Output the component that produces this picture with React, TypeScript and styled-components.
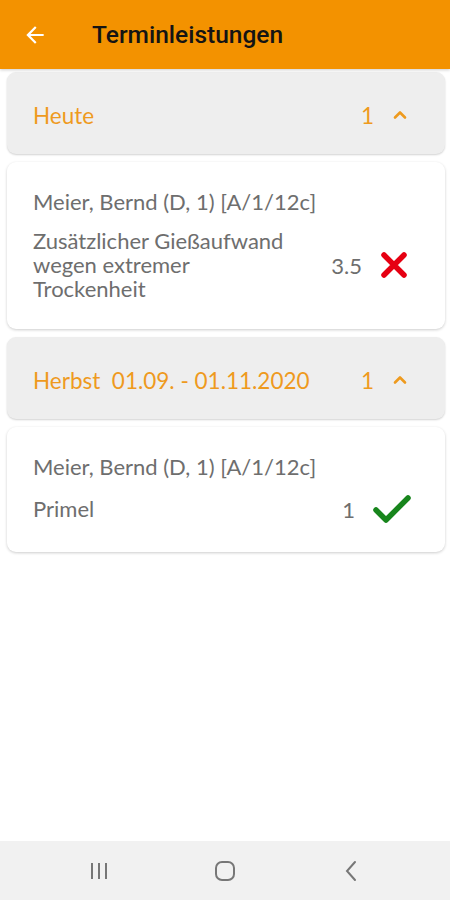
import { FC } from 'react'
import styled, { createGlobalStyle } from 'styled-components'

const GlobalStyle = createGlobalStyle`
  html, body {
    margin: 0;
    padding: 0;
    background: #ffffff;
  }
  #root {
    height: 900px;
  }
`

type Entry = {
  person: string,
  text: string,
  amount: string,
  done: boolean
}

type Group = {
  title: string,
  count: number,
  entries: Entry[]
}

const groups: Group[] = [
  {
    title: 'Heute',
    count: 1,
    entries: [
      {
        person: 'Meier, Bernd (D, 1) [A/1/12c]',
        text: 'Zusätzlicher Gießaufwand wegen extremer Trockenheit',
        amount: '3.5',
        done: false
      }
    ]
  },
  {
    title: 'Herbst\u00a0\u00a001.09. - 01.11.2020',
    count: 1,
    entries: [
      {
        person: 'Meier, Bernd (D, 1) [A/1/12c]',
        text: 'Primel',
        amount: '1',
        done: true
      }
    ]
  }
]

const BackArrow = () => (
  <svg width="26" height="26" viewBox="0 0 24 24">
    <path d="M20 11H7.83l5.59-5.59L12 4l-8 8 8 8 1.41-1.41L7.83 13H20v-2z" fill="#ffffff" />
  </svg>
)

const Chevron = () => (
  <svg width="16" height="16" viewBox="0 0 16 16">
    <path d="M3 10.5 L8 5.5 L13 10.5" fill="none" stroke="#ee9a1e" strokeWidth="2.6" strokeLinecap="round" strokeLinejoin="round" />
  </svg>
)

const Cross = () => (
  <svg width="28" height="28" viewBox="0 0 28 28">
    <path d="M4 4 L24 24 M24 4 L4 24" stroke="#e60012" strokeWidth="5.5" strokeLinecap="round" />
  </svg>
)

const Check = () => (
  <svg width="38" height="30" viewBox="0 0 38 30">
    <path d="M3 16 L13 26 L35 4" fill="none" stroke="#17851c" strokeWidth="5.5" strokeLinecap="round" strokeLinejoin="round" />
  </svg>
)

const App: FC = () => {
  return (
    <Screen>
      <GlobalStyle />
      <TopBar>
        <BackButton><BackArrow /></BackButton>
        <Title>Terminleistungen</Title>
      </TopBar>
      <Content>
        {groups.map((group) => (
          <Section key={group.title}>
            <GroupHeader>
              <GroupTitle>{group.title}</GroupTitle>
              <GroupCount>{group.count}</GroupCount>
              <Chevron />
            </GroupHeader>
            {group.entries.map((entry, i) => (
              <EntryCard key={i}>
                <Person>{entry.person}</Person>
                <EntryRow>
                  <EntryText>{entry.text}</EntryText>
                  <Amount>{entry.amount}</Amount>
                  <StatusIcon $done={entry.done}>
                    {entry.done ? <Check /> : <Cross />}
                  </StatusIcon>
                </EntryRow>
              </EntryCard>
            ))}
          </Section>
        ))}
      </Content>
      <NavBar>
        <NavButton>
          <svg width="22" height="18" viewBox="0 0 22 18">
            <path d="M4 1 V17 M11 1 V17 M18 1 V17" stroke="#777" strokeWidth="2" />
          </svg>
        </NavButton>
        <NavButton>
          <svg width="22" height="22" viewBox="0 0 22 22">
            <rect x="2" y="2" width="18" height="18" rx="6" fill="none" stroke="#777" strokeWidth="2" />
          </svg>
        </NavButton>
        <NavButton>
          <svg width="14" height="22" viewBox="0 0 14 22">
            <path d="M11 2 L3 11 L11 20" fill="none" stroke="#777" strokeWidth="2" strokeLinecap="round" />
          </svg>
        </NavButton>
      </NavBar>
    </Screen>
  )
}

export default App

export const Screen = styled('div')`
  height: 900px;
  display: flex;
  flex-direction: column;
  font-family: Lato, "Noto Sans", sans-serif;
`

export const TopBar = styled('header')`
  height: 69px;
  flex-shrink: 0;
  background-color: #f39200;
  display: flex;
  align-items: center;
  padding-left: 22px;
  box-shadow: 0 1px 3px rgba(0, 0, 0, 0.2);
  position: relative;
  z-index: 1;
`

export const BackButton = styled('div')`
  width: 26px;
  height: 26px;
  display: flex;
  align-items: center;
  justify-content: center;
  margin-right: 44px;
`

export const Title = styled('h1')`
  margin: 0;
  font-family: Roboto, "Noto Sans", sans-serif;
  font-weight: 500;
  font-size: 24.5px;
  color: #141414;
`

export const Content = styled('main')`
  flex: 1;
  padding: 3px 5px 0 7px;
  display: flex;
  flex-direction: column;
  gap: 8px;
`

export const Section = styled('section')`
  display: flex;
  flex-direction: column;
  gap: 8px;
`

export const GroupHeader = styled('div')`
  height: 82px;
  box-sizing: border-box;
  padding: 4px 37px 0 26px;
  background-color: #eeeeee;
  border-radius: 9px;
  box-shadow: 0 1px 2px rgba(0, 0, 0, 0.18);
  display: flex;
  align-items: center;
  color: #ee9a1e;
  font-size: 22.5px;
`

export const GroupTitle = styled('span')`
  flex: 1;
`

export const GroupCount = styled('span')`
  margin-right: 18px;
`

export const EntryCard = styled('div')`
  background-color: #ffffff;
  border-radius: 9px;
  box-shadow: 0 1px 3px rgba(0, 0, 0, 0.2);
  padding: 28px 37px 28px 26px;
  color: #6e6e6e;
  font-size: 22px;
`

export const Person = styled('div')`
  line-height: 24px;
  margin-bottom: 15px;
`

export const EntryRow = styled('div')`
  display: flex;
  align-items: center;
`

export const EntryText = styled('div')`
  width: 273px;
  line-height: 24px;
  margin-right: auto;
`

export const Amount = styled('span')`
  margin-right: 18px;
`

export const StatusIcon = styled('span')<{ $done: boolean }>`
  display: flex;
  align-items: center;
  margin-right: ${({ $done }) => ($done ? '-3px' : '0')};
`

export const NavBar = styled('nav')`
  height: 59px;
  flex-shrink: 0;
  background-color: #f1f1f1;
  display: flex;
  align-items: center;
  justify-content: center;
  gap: 94px;
`

export const NavButton = styled('div')`
  width: 32px;
  display: flex;
  justify-content: center;
`
